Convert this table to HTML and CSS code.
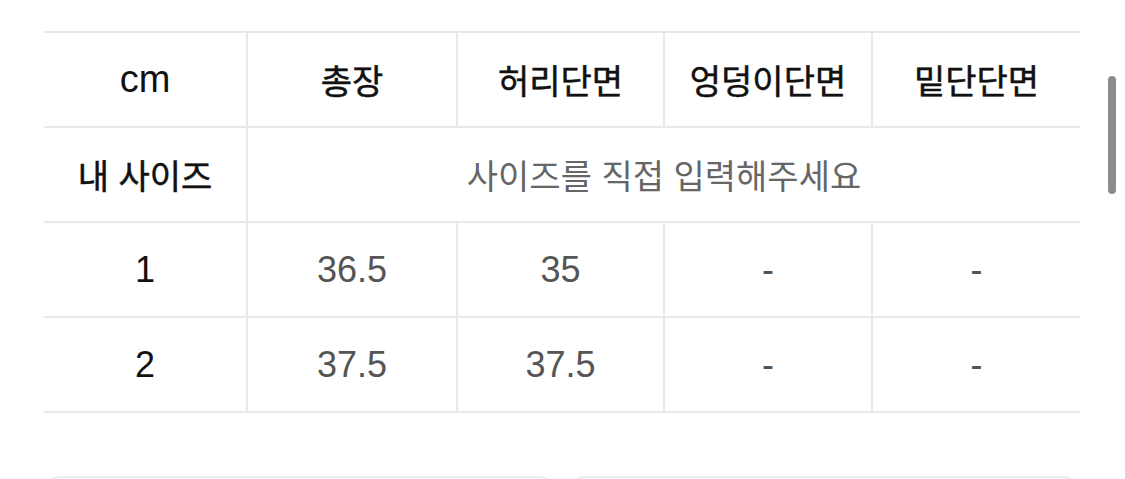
FILE: index.html
```html
<!DOCTYPE html>
<html lang="ko">
<head>
<meta charset="utf-8">
<title>사이즈 표</title>
<link rel="stylesheet" href="styles.css">
</head>
<body>
<div class="page">
  <div class="table-wrap">
    <table class="size-table">
      <colgroup>
        <col class="c-first">
        <col class="c-a">
        <col class="c-b">
        <col class="c-c">
        <col class="c-d">
      </colgroup>
      <thead>
        <tr>
          <th class="unit">cm</th>
          <th>총장</th>
          <th>허리단면</th>
          <th>엉덩이단면</th>
          <th>밑단단면</th>
        </tr>
      </thead>
      <tbody>
        <tr>
          <th class="label">내 사이즈</th>
          <td class="placeholder" colspan="4">사이즈를 직접 입력해주세요</td>
        </tr>
        <tr>
          <th class="num">1</th>
          <td class="val">36.5</td>
          <td class="val">35</td>
          <td class="val">-</td>
          <td class="val">-</td>
        </tr>
        <tr>
          <th class="num">2</th>
          <td class="val">37.5</td>
          <td class="val">37.5</td>
          <td class="val">-</td>
          <td class="val">-</td>
        </tr>
      </tbody>
    </table>
  </div>
  <div class="buttons">
    <div class="btn-box"></div>
    <div class="btn-box"></div>
  </div>
  <div class="scroll-indicator"></div>
</div>
</body>
</html>
```

FILE: styles.css
```css
html, body {
  margin: 0;
  padding: 0;
  background: #ffffff;
  overflow: hidden;
}

body {
  font-family: "Liberation Sans", "Noto Sans CJK KR", sans-serif;
  color: #111111;
}

.page {
  position: relative;
  width: 1125px;
  height: 479px;
  padding: 31px 45px 0 44px;
  box-sizing: border-box;
  overflow: hidden;
}

.table-wrap {
  overflow: hidden;
}

.size-table {
  border-collapse: collapse;
  table-layout: fixed;
  width: 1036px;
}

.c-first { width: 203px; }
.c-a { width: 210px; }
.c-b { width: 207px; }
.c-c { width: 208px; }
.c-d { width: 208px; }

.size-table th,
.size-table td {
  height: 93px;
  padding: 0;
  border: 2px solid #e9e9e9;
  text-align: center;
  vertical-align: middle;
  white-space: nowrap;
}

.size-table tr > :first-child {
  border-left: none;
}

.size-table tr > :last-child {
  border-right: none;
}

.size-table thead th,
.size-table th.label {
  font-family: "Noto Sans CJK KR", sans-serif;
  font-size: 34px;
  font-weight: 400;
  color: #111111;
  -webkit-text-stroke: 0.5px #111111;
}

.size-table thead th.unit {
  font-family: "Liberation Sans", sans-serif;
  font-size: 38px;
  font-weight: 400;
  -webkit-text-stroke: 0;
}

.size-table td.placeholder {
  font-family: "Noto Sans CJK KR", sans-serif;
  font-size: 34px;
  font-weight: 400;
  color: #666666;
}

.size-table th.num {
  font-size: 36px;
  font-weight: 400;
  color: #111111;
}

.size-table td.val {
  font-size: 36px;
  font-weight: 400;
  color: #555555;
}

.buttons {
  display: flex;
  gap: 16px;
  margin-top: 63px;
  padding-left: 1px;
  padding-right: 2px;
}

.btn-box {
  flex: 1;
  height: 40px;
  border: 2px solid #ececec;
  border-radius: 14px;
}

.scroll-indicator {
  position: absolute;
  left: 1108px;
  top: 76px;
  width: 8px;
  height: 118px;
  border-radius: 4px;
  background: #8c8c8c;
}
```
